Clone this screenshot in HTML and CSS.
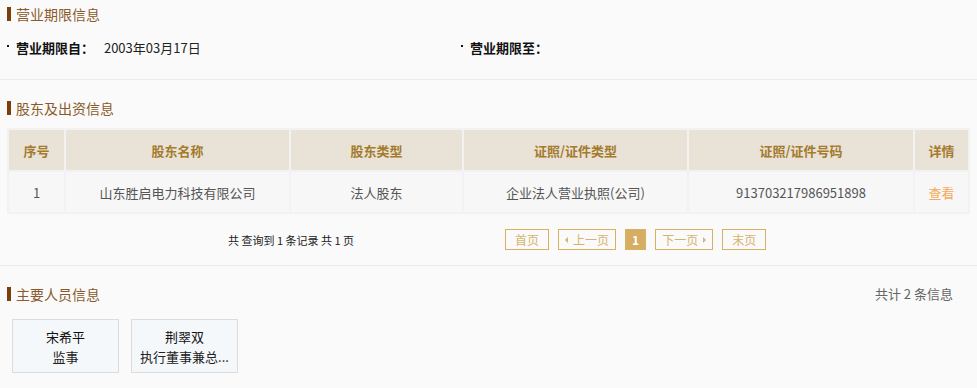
FILE: index.html
```html
<!DOCTYPE html>
<html lang="zh-CN">
<head>
    <meta charset="UTF-8">
    <title>企业信息</title>
    <link rel="stylesheet" href="styles.css">
</head>
<body>
    <div class="section first">
        <h2 class="section-title">营业期限信息</h2>
        <div class="term-row">
            <div class="term-item">
                <span class="term-label">营业期限自：</span>
                <span class="term-value">2003年03月17日</span>
            </div>
            <div class="term-item">
                <span class="term-label">营业期限至：</span>
                <span class="term-value"></span>
            </div>
        </div>
    </div>

    <div class="section">
        <h2 class="section-title">股东及出资信息</h2>
        <table class="holder-table">
            <thead>
                <tr>
                    <th class="col-no">序号</th>
                    <th class="col-name">股东名称</th>
                    <th class="col-type">股东类型</th>
                    <th class="col-cert">证照/证件类型</th>
                    <th class="col-code">证照/证件号码</th>
                    <th class="col-detail">详情</th>
                </tr>
            </thead>
            <tbody>
                <tr>
                    <td>1</td>
                    <td>山东胜启电力科技有限公司</td>
                    <td>法人股东</td>
                    <td>企业法人营业执照(公司)</td>
                    <td>913703217986951898</td>
                    <td><a class="view-link" href="#">查看</a></td>
                </tr>
            </tbody>
        </table>
        <div class="pager">
            <div class="pager-info">共 查询到 1 条记录 共 1 页</div>
            <div class="pager-buttons">
                <a class="page-btn" href="#">首页</a>
                <a class="page-btn step" href="#"><span class="arrow-left"></span>上一页</a>
                <a class="page-btn active" href="#">1</a>
                <a class="page-btn step" href="#">下一页<span class="arrow-right"></span></a>
                <a class="page-btn" href="#">末页</a>
            </div>
        </div>
    </div>

    <div class="section last">
        <div class="title-row">
            <h2 class="section-title">主要人员信息</h2>
            <span class="total-count">共计 2 条信息</span>
        </div>
        <div class="person-list">
            <div class="person-card">
                <div class="person-name">宋希平</div>
                <div class="person-role">监事</div>
            </div>
            <div class="person-card">
                <div class="person-name">荆翠双</div>
                <div class="person-role">执行董事兼总...</div>
            </div>
        </div>
    </div>
</body>
</html>
```

FILE: styles.css
```css
body {
    margin: 0;
    background: #fafafa;
    font-family: "Noto Sans CJK SC", "Liberation Sans", sans-serif;
    font-size: 13px;
    color: #333;
}

.section {
    padding: 0 7px;
    border-bottom: 1px solid #ebebeb;
}

.section.first {
    padding-top: 4px;
    padding-bottom: 22px;
}

.section.last {
    border-bottom: none;
}

.section-title {
    margin: 0;
    padding-left: 5px;
    border-left: 4px solid #7b3f0a;
    font-size: 14px;
    font-weight: normal;
    line-height: 14px;
    height: 14px;
    color: #8b5a2b;
}

.section.first .section-title {
    margin-top: 3px;
}

.term-row {
    display: flex;
    margin-top: 18px;
    line-height: 18px;
}

.term-item {
    width: 454px;
}

.term-label {
    position: relative;
    padding-left: 9px;
    font-weight: bold;
    color: #111;
}

.term-label::before {
    content: "";
    position: absolute;
    left: 0;
    top: 7px;
    width: 2px;
    height: 2px;
    background: #111;
}

.term-value {
    margin-left: 7px;
    color: #222;
}

.section:nth-child(2) .section-title {
    margin-top: 21px;
}

.holder-table {
    width: 963px;
    margin-top: 13px;
    border-collapse: collapse;
    text-align: center;
}

.holder-table th,
.holder-table td {
    border: 2px solid #f2f2f2;
    height: 40px;
    padding: 0;
}

.holder-table th {
    background: #e9e2d7;
    color: #a47a2c;
    font-size: 13px;
}

.holder-table td {
    background: #f7f7f7;
    color: #555;
}

.col-no { width: 55px; }
.col-name { width: 223px; }
.col-type { width: 171px; }
.col-cert { width: 223px; }
.col-code { width: 224px; }

.view-link {
    color: #f6a956;
    text-decoration: none;
}

.pager {
    display: flex;
    align-items: center;
    height: 21px;
    padding: 15px 0 15px;
}

.pager-info {
    width: 498px;
    padding-left: 221px;
    box-sizing: border-box;
    font-size: 11px;
    color: #222;
}

.pager-buttons {
    display: flex;
    gap: 9px;
}

.page-btn {
    display: flex;
    align-items: center;
    justify-content: center;
    height: 19px;
    padding: 0 9px;
    border: 1px solid #d8b062;
    color: #d7b26a;
    font-size: 12px;
    text-decoration: none;
}

.page-btn.step {
    padding: 0 6px;
}

.page-btn.active {
    padding: 0 6px;
    background: #d5ad63;
    color: #fff;
    font-weight: bold;
}

.arrow-left,
.arrow-right {
    width: 0;
    height: 0;
    border-top: 3px solid transparent;
    border-bottom: 3px solid transparent;
}

.arrow-left {
    margin-right: 5px;
    border-right: 3px solid #d7b26a;
}

.arrow-right {
    margin-left: 5px;
    border-left: 3px solid #d7b26a;
}

.title-row {
    display: flex;
    justify-content: space-between;
    align-items: center;
    margin-top: 18px;
    padding-right: 17px;
}

.total-count {
    color: #666;
    font-size: 13px;
}

.person-list {
    display: flex;
    gap: 12px;
    margin-top: 16px;
    padding-left: 5px;
}

.person-card {
    width: 105px;
    height: 52px;
    border: 1px solid #dcdcdc;
    background: #f5f8fa;
    text-align: center;
}

.person-name {
    margin-top: 7px;
    line-height: 20px;
    color: #111;
}

.person-role {
    line-height: 20px;
    color: #222;
}
```
